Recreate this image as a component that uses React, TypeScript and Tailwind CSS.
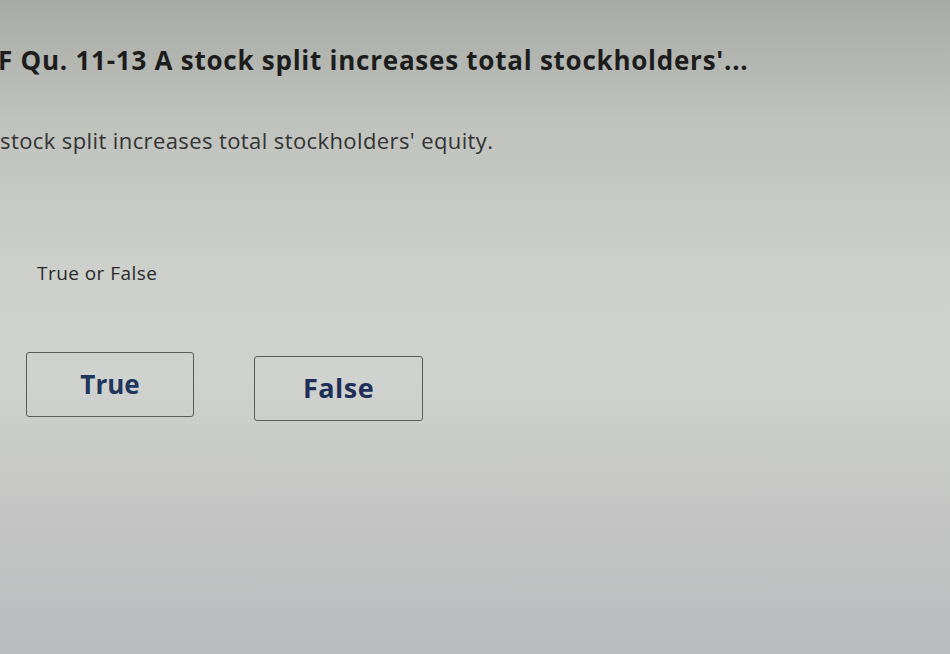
export default function App() {
  return (
    <div
      className="relative h-[654px] w-[950px] overflow-hidden bg-[linear-gradient(180deg,#a7aaa5_0%,#bfc1bd_18%,#cdcfcb_40%,#d0d2cf_58%,#c3c4c3_80%,#bbbcbe_100%)] text-[#222]"
      style={{ fontFamily: '"Open Sans", Lato, sans-serif' }}
    >
      {/* Title */}
      <h1 className="ml-[-2px] pt-[44px] text-[26px] font-bold leading-[32px] tracking-[0.75px] text-[#1d1d1d] whitespace-nowrap">
        F Qu. 11-13 A stock split increases total stockholders'...
      </h1>

      {/* Question */}
      <p className="mt-[50px] text-[22px] leading-[28px] tracking-[0.4px] text-[#333]">
        stock split increases total stockholders' equity.
      </p>

      {/* Prompt */}
      <p className="ml-[37px] mt-[107px] text-[19px] leading-[24px] tracking-[0.45px] text-[#2a2a2a]">
        True or False
      </p>

      {/* Answers */}
      <div className="ml-[26px] mt-[67px] flex items-start gap-[60px]">
        <button className="flex h-[65px] w-[168px] items-center justify-center rounded-[3px] border border-[#5a5c5a] text-[26px] font-bold text-[#22355c]">
          True
        </button>
        <button className="mt-[4px] flex h-[65px] w-[169px] items-center justify-center rounded-[3px] border border-[#5a5c5a] text-[27px] font-bold tracking-[0.5px] text-[#1f3058]">
          False
        </button>
      </div>
    </div>
  );
}
